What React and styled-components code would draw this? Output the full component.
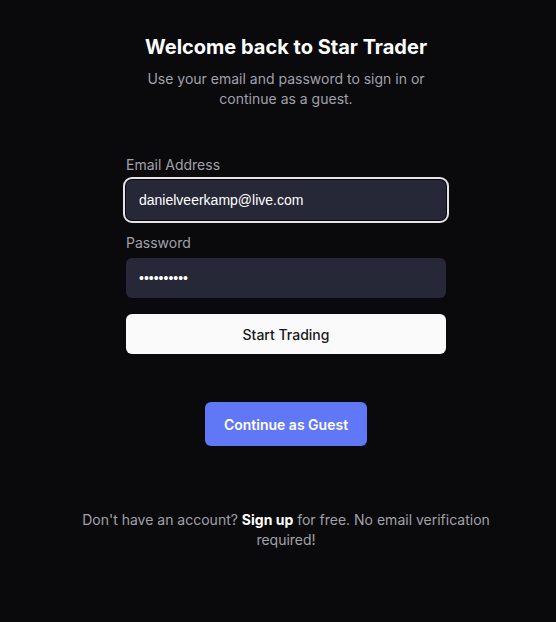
import React from 'react';
import styled, { createGlobalStyle } from 'styled-components';

const GlobalStyle = createGlobalStyle`
    html, body {
        margin: 0;
        padding: 0;
        background-color: #0a0a0c;
        overflow: hidden;
    }
    body {
        font-family: Inter, "Liberation Sans", sans-serif;
        color: #fafafa;
    }
`

const App = () => {
    const [email, setEmail] = React.useState('danielveerkamp@live.com');
    const [password, setPassword] = React.useState('abcdefghij');

    return (
        <>
        <GlobalStyle />
        <Page>
            <Title>Welcome back to Star Trader</Title>
            <Subtitle>Use your email and password to sign in or continue as a guest.</Subtitle>
            <Form onSubmit={e => e.preventDefault()}>
                <Field>
                    <Label htmlFor="email">Email Address</Label>
                    <Input id="email" type="email" value={email} $focused onChange={e => setEmail(e.target.value)} />
                </Field>
                <Field>
                    <Label htmlFor="password">Password</Label>
                    <Input id="password" type="password" value={password} onChange={e => setPassword(e.target.value)} />
                </Field>
                <SubmitButton type="submit">Start Trading</SubmitButton>
            </Form>
            <GuestButton>Continue as Guest</GuestButton>
            <Footer>
                Don't have an account? <strong>Sign up</strong> for free. No email verification required!
            </Footer>
        </Page>
        </>
    )
}

// content sits 8px right of the window centre in the original
const Page = styled.main`
    display: flex;
    flex-direction: column;
    align-items: center;
    padding: 33px 0 0 16px;
`

const Title = styled.h1`
    margin: 0;
    font-size: 20px;
    line-height: 28px;
    font-weight: 700;
    color: #ffffff;
`

const Subtitle = styled.p`
    margin: 8px 0 0;
    max-width: 300px;
    text-align: center;
    font-size: 14px;
    line-height: 20px;
    color: #a1a1aa;
`

const Form = styled.form`
    margin-top: 46px;
    width: 320px;
    display: flex;
    flex-direction: column;
    gap: 13px;
`

const Field = styled.div`
    display: flex;
    flex-direction: column;
    gap: 5px;
`

const Label = styled.label`
    font-size: 14px;
    line-height: 20px;
    color: #a1a1aa;
`

const Input = styled.input`
    height: 40px;
    box-sizing: border-box;
    border: none;
    border-radius: 6px;
    padding: 0 13px;
    background-color: #262838;
    color: #ffffff;
    font-family: "Liberation Sans", Arial, sans-serif;
    font-size: 14px;
    outline: ${props => props.$focused ? '2px solid #e4e4e7' : 'none'};
    outline-offset: 1px;
`

const SubmitButton = styled.button`
    margin-top: 3px;
    height: 40px;
    border: none;
    border-radius: 6px;
    background-color: #fafafa;
    color: #18181b;
    font-family: Inter, sans-serif;
    font-size: 14px;
    font-weight: 500;
    cursor: pointer;
`

const GuestButton = styled.button`
    margin-top: 48px;
    width: 162px;
    height: 44px;
    border: none;
    border-radius: 6px;
    background-color: #6077f6;
    color: #ffffff;
    font-family: Inter, sans-serif;
    font-size: 14px;
    font-weight: 600;
    cursor: pointer;
`

const Footer = styled.p`
    margin: 64px 0 0;
    max-width: 410px;
    text-align: center;
    font-size: 14px;
    line-height: 20px;
    color: #a1a1aa;

    strong {
        color: #ffffff;
        font-weight: 700;
    }
`

export default App
